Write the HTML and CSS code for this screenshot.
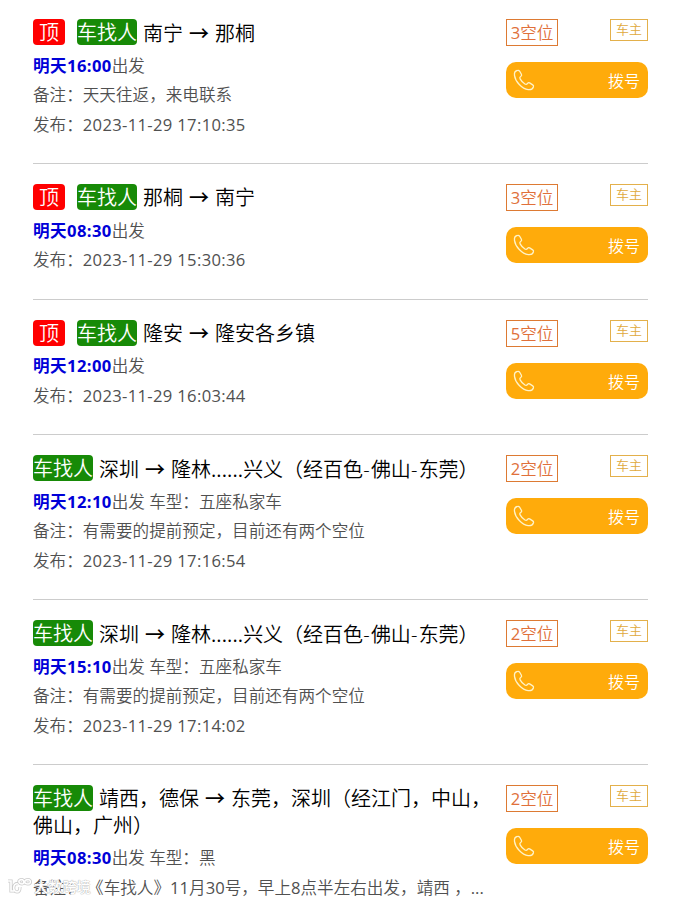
FILE: index.html
```html
<!DOCTYPE html>
<html lang="zh-CN">
<head>
    <meta charset="UTF-8">
    <meta name="viewport" content="width=device-width, initial-scale=1.0">
    <title>车找人</title>
    <link rel="stylesheet" href="styles.css">
</head>
<body>
    <svg width="0" height="0" class="defs">
        <symbol id="phone" viewBox="0 0 22 22">
            <path d="M4.2 1.5C2.3 2 1.2 4 1.5 6.3C2.2 12.5 9 19.8 15.2 20.6C17.5 20.9 19.6 19.9 20.4 17.9C20.8 17 20.4 16.4 19.7 15.9L16.6 13.9C15.8 13.4 15.1 13.6 14.6 14.3C13.8 15.4 13 15.7 11.9 15C10 13.8 8.2 11.9 7.1 9.9C6.5 8.8 6.8 8 7.9 7.3C8.6 6.8 8.8 6.1 8.4 5.3L6.7 2.3C6.1 1.3 5.2 1.2 4.2 1.5Z"/>
        </symbol>
    </svg>
    <div class="list">
        <div class="item">
            <div class="info">
                <div class="title"><span class="tag top">顶</span><span class="tag type">车找人</span>南宁<span class="arrow">→</span>那桐</div>
                <p><b>明天16:00</b>出发</p>
                <p>备注：天天往返，来电联系</p>
                <p>发布：<span class="date">2023-11-29 17:10:35</span></p>
            </div>
            <div class="side">
                <div class="row"><span class="seat"><span class="num">3</span>空位</span><span class="owner">车主</span></div>
                <a class="call"><svg><use href="#phone"/></svg>拨号</a>
            </div>
        </div>
        <div class="item">
            <div class="info">
                <div class="title"><span class="tag top">顶</span><span class="tag type">车找人</span>那桐<span class="arrow">→</span>南宁</div>
                <p><b>明天08:30</b>出发</p>
                <p>发布：<span class="date">2023-11-29 15:30:36</span></p>
            </div>
            <div class="side">
                <div class="row"><span class="seat"><span class="num">3</span>空位</span><span class="owner">车主</span></div>
                <a class="call"><svg><use href="#phone"/></svg>拨号</a>
            </div>
        </div>
        <div class="item">
            <div class="info">
                <div class="title"><span class="tag top">顶</span><span class="tag type">车找人</span>隆安<span class="arrow">→</span>隆安各乡镇</div>
                <p><b>明天12:00</b>出发</p>
                <p>发布：<span class="date">2023-11-29 16:03:44</span></p>
            </div>
            <div class="side">
                <div class="row"><span class="seat"><span class="num">5</span>空位</span><span class="owner">车主</span></div>
                <a class="call"><svg><use href="#phone"/></svg>拨号</a>
            </div>
        </div>
        <div class="item">
            <div class="info">
                <div class="title"><span class="tag type">车找人</span>深圳<span class="arrow">→</span>隆林<span class="dots">......</span>兴义（经百色<span class="dash">-</span>佛山<span class="dash">-</span>东莞）</div>
                <p><b>明天12:10</b>出发 车型：五座私家车</p>
                <p>备注：有需要的提前预定，目前还有两个空位</p>
                <p>发布：<span class="date">2023-11-29 17:16:54</span></p>
            </div>
            <div class="side">
                <div class="row"><span class="seat"><span class="num">2</span>空位</span><span class="owner">车主</span></div>
                <a class="call"><svg><use href="#phone"/></svg>拨号</a>
            </div>
        </div>
        <div class="item">
            <div class="info">
                <div class="title"><span class="tag type">车找人</span>深圳<span class="arrow">→</span>隆林<span class="dots">......</span>兴义（经百色<span class="dash">-</span>佛山<span class="dash">-</span>东莞）</div>
                <p><b>明天15:10</b>出发 车型：五座私家车</p>
                <p>备注：有需要的提前预定，目前还有两个空位</p>
                <p>发布：<span class="date">2023-11-29 17:14:02</span></p>
            </div>
            <div class="side">
                <div class="row"><span class="seat"><span class="num">2</span>空位</span><span class="owner">车主</span></div>
                <a class="call"><svg><use href="#phone"/></svg>拨号</a>
            </div>
        </div>
        <div class="item">
            <div class="info">
                <div class="title"><span class="tag type">车找人</span>靖西，德保<span class="arrow">→</span>东莞，深圳（经江门，中山，佛山，广州）</div>
                <p><b>明天08:30</b>出发 车型：黑</p>
                <p>备注： 《车找人》<span class="num">11</span>月<span class="num">30</span>号，早上<span class="num">8</span>点半左右出发，靖西 ，<span class="num">...</span></p>
            </div>
            <div class="side">
                <div class="row"><span class="seat"><span class="num">2</span>空位</span><span class="owner">车主</span></div>
                <a class="call"><svg><use href="#phone"/></svg>拨号</a>
            </div>
        </div>
    </div>
    <div class="watermark">
        <svg width="26" height="18" viewBox="0 0 26 18">
            <path class="edge" d="M2 4H5V14H8M12 7C7 5 6 15 11 15C14 15 14 12 14 10M14 3C18 1 19 7 16 7C13 7 12 4 14 3M20 3C25 1 26 7 22 7C18 7 18 4 20 3"/>
            <path d="M2 4H5V14H8M12 7C7 5 6 15 11 15C14 15 14 12 14 10M14 3C18 1 19 7 16 7C13 7 12 4 14 3M20 3C25 1 26 7 22 7C18 7 18 4 20 3"/>
        </svg>
        <span>大数跨境</span>
    </div>
</body>
</html>
```

FILE: styles.css
```css
* {
    box-sizing: border-box;
}
body {
    margin: 0;
    height: 900px;
    overflow: hidden;
    position: relative;
    background: #fff;
    color: #505050;
    font-family: "Open Sans", "Noto Sans CJK SC", sans-serif;
    font-size: 16.6px;
    font-weight: 350;
}
.defs {
    position: absolute;
}
.list {
    width: 615px;
    margin: -1px 0 0 33px;
}
.item {
    display: flex;
    justify-content: space-between;
    align-items: flex-start;
    padding: 20px 0 23.9px;
    border-bottom: 1px solid #ccc;
}
.info {
    width: 465px;
}
.title {
    padding-top: 1.5px;
    margin-bottom: 3.9px;
    color: #000;
    font-size: 20px;
    line-height: 26.5px;
}
.tag {
    display: inline-block;
    height: 26px;
    line-height: 28px;
    margin: -1.5px 6px 0 0;
    border-radius: 4px;
    color: #fff;
    vertical-align: top;
}
.top {
    padding: 0 6px;
    margin-right: 12px;
    background: #f00;
}
.type {
    background: #178a07;
}
.arrow {
    display: inline-block;
    width: 32px;
    text-align: center;
    font-family: "Noto Sans CJK SC", sans-serif;
    font-weight: 500;
    line-height: 20px;
}
.dots {
    font-weight: 400;
    letter-spacing: 0.1px;
}
.dash {
    letter-spacing: 1.3px;
}
p {
    margin: 0;
    line-height: 29.4px;
    height: 29.4px;
    white-space: nowrap;
}
b {
    color: #0000d8;
    font-weight: 700;
    letter-spacing: 0.4px;
}
.date {
    font-weight: 400;
    letter-spacing: 0.33px;
}
.num {
    font-weight: 400;
}
.side {
    width: 142px;
}
.row {
    display: flex;
    justify-content: space-between;
    align-items: flex-start;
}
.seat {
    width: 52px;
    height: 27px;
    line-height: 25px;
    border: 1px solid #dd7a33;
    color: #e0703a;
    text-align: center;
}
.owner {
    width: 38px;
    height: 22px;
    line-height: 19px;
    border: 1px solid #e3b04b;
    color: #dfa93c;
    font-size: 13px;
    text-align: center;
}
.call {
    display: flex;
    justify-content: space-between;
    align-items: center;
    height: 36px;
    margin-top: 16px;
    padding: 0 8px 0 7px;
    border-radius: 10px;
    background: #ffab0b;
    color: #fff;
    font-size: 16px;
}
.call svg {
    width: 22px;
    height: 22px;
    fill: none;
    stroke: #fff3c8;
    stroke-width: 1.3;
}
.watermark {
    position: absolute;
    left: 6px;
    top: 876px;
    display: flex;
    align-items: center;
    gap: 2px;
    height: 20px;
    color: #fff;
    font-size: 14.2px;
    font-weight: 500;
    text-shadow: 0 0 1px #aaa, 0 0 1px #aaa;
}
.watermark svg {
    fill: none;
    stroke: #fff;
    stroke-width: 1.6;
}
.watermark .edge {
    stroke: #ccc;
    stroke-width: 3.2;
}
```
